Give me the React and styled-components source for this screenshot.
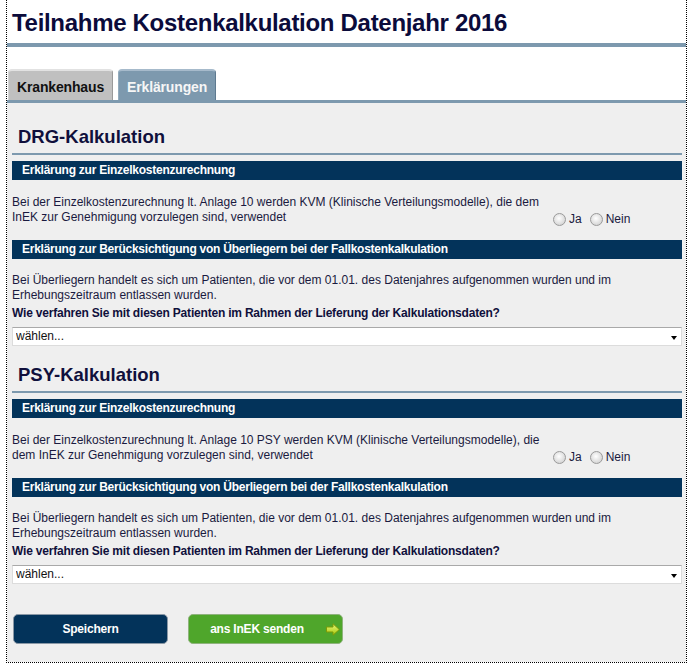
import React from 'react';
import styled, { createGlobalStyle } from 'styled-components';

const GlobalStyle = createGlobalStyle`
    body {
        margin: 0;
        background: #ffffff;
        font-family: "Liberation Sans", Arial, sans-serif;
        color: #1a1a40;
    }
`;

const sections = [
    {
        title: 'DRG-Kalkulation',
        kvm: 'Bei der Einzelkostenzurechnung lt. Anlage 10 werden KVM (Klinische Verteilungsmodelle), die dem InEK zur Genehmigung vorzulegen sind, verwendet',
    },
    {
        title: 'PSY-Kalkulation',
        kvm: 'Bei der Einzelkostenzurechnung lt. Anlage 10 PSY werden KVM (Klinische Verteilungsmodelle), die dem InEK zur Genehmigung vorzulegen sind, verwendet',
    },
];

function ArrowIcon() {
    return (
        <svg width="14" height="13" viewBox="0 0 14 13">
            <defs>
                <linearGradient id="arr" x1="0" y1="0" x2="0" y2="1">
                    <stop offset="0" stopColor="#e6f77a" />
                    <stop offset="1" stopColor="#a8c80a" />
                </linearGradient>
            </defs>
            <polygon
                points="0.5,4 7,4 7,0.8 13.3,6.5 7,12.2 7,9 0.5,9"
                fill="url(#arr)"
                stroke="#7d9a08"
                strokeWidth="1"
            />
        </svg>
    );
}

function Section({ title, kvm }) {
    return (
        <SectionBox>
            <SectionTitle>{title}</SectionTitle>
            <Bar>Erklärung zur Einzelkostenzurechnung</Bar>
            <QuestionRow>
                <RowText>{kvm}</RowText>
                <RadioGroup>
                    <RadioLabel>
                        <Radio />
                        Ja
                    </RadioLabel>
                    <RadioLabel>
                        <Radio />
                        Nein
                    </RadioLabel>
                </RadioGroup>
            </QuestionRow>
            <Bar>Erklärung zur Berücksichtigung von Überliegern bei der Fallkostenkalkulation</Bar>
            <Paragraph>
                Bei Überliegern handelt es sich um Patienten, die vor dem 01.01. des Datenjahres aufgenommen wurden und im
                Erhebungszeitraum entlassen wurden.
            </Paragraph>
            <Question>Wie verfahren Sie mit diesen Patienten im Rahmen der Lieferung der Kalkulationsdaten?</Question>
            <SelectWrap>
                <Select defaultValue="">
                    <option value="">wählen...</option>
                </Select>
            </SelectWrap>
        </SectionBox>
    );
}

function App() {
    return (
        <>
            <GlobalStyle />
            <Frame>
                <Title>Teilnahme Kostenkalkulation Datenjahr 2016</Title>
                <HeaderRule />
                <TabBar>
                    <Tab>Krankenhaus</Tab>
                    <Tab active>Erklärungen</Tab>
                </TabBar>
                <Content>
                    {sections.map((s) => (
                        <Section key={s.title} title={s.title} kvm={s.kvm} />
                    ))}
                    <Buttons>
                        <ActionButton>Speichern</ActionButton>
                        <ActionButton green>
                            ans InEK senden
                            <ArrowSlot>
                                <ArrowIcon />
                            </ArrowSlot>
                        </ActionButton>
                    </Buttons>
                </Content>
            </Frame>
        </>
    );
}

const Frame = styled.div`
    box-sizing: border-box;
    width: 681px;
    margin-left: 6px;
    border: 1px dotted #000;
    border-top: none;
`;

const Title = styled.h1`
    margin: 0;
    padding: 8px 0 0 5px;
    font-size: 24px;
    line-height: 30px;
    letter-spacing: -0.3px;
    font-weight: bold;
    color: #0b0b3b;
`;

const HeaderRule = styled.div`
    height: 4px;
    margin-top: 5px;
    background: #7d99ae;
`;

const TabBar = styled.div`
    display: flex;
    align-items: flex-end;
    gap: 5px;
    padding: 22px 0 0 1px;
    border-bottom: 3px solid #7d99ae;
`;

const Tab = styled.div`
    box-sizing: border-box;
    height: 31px;
    padding: 8px 8px 0;
    border-top: 2px solid ${(p) => (p.active ? '#a6bacb' : '#e2e2e2')};
    border-left: 1px solid ${(p) => (p.active ? '#93abbd' : '#d4d4d4')};
    border-right: 1px solid ${(p) => (p.active ? '#5e7a90' : '#9a9a9a')};
    border-radius: 4px 4px 0 0;
    background: ${(p) => (p.active ? '#7d99ae' : '#c0c0c0')};
    color: ${(p) => (p.active ? '#f6f6f6' : '#111111')};
    font-size: 14px;
    line-height: 16px;
    font-weight: bold;
    letter-spacing: -0.15px;
`;

const Content = styled.div`
    background: #efefef;
    padding: 5px 4px 18px 5px;
`;

const SectionBox = styled.div`
    padding-top: 18px;
`;

const SectionTitle = styled.h2`
    margin: 0;
    padding: 0 0 5px 6px;
    border-bottom: 2px solid #7d99ae;
    font-size: 18.5px;
    line-height: 22px;
    font-weight: bold;
    color: #10103c;
`;

const Bar = styled.div`
    margin-top: 6px;
    height: 19px;
    padding-left: 10px;
    background: #03335a;
    color: #ffffff;
    font-size: 12px;
    line-height: 19px;
    font-weight: bold;
    letter-spacing: -0.25px;
`;

const QuestionRow = styled.div`
    display: flex;
    margin: 15px 0 15px;
`;

const RowText = styled.div`
    flex: 0 0 538px;
    font-size: 12px;
    line-height: 15px;
`;

const RadioGroup = styled.div`
    align-self: flex-end;
    display: flex;
    align-items: center;
    gap: 8px;
    margin: 0 0 -2px 3px;
    font-size: 12px;
    line-height: 15px;
`;

const RadioLabel = styled.label`
    display: flex;
    align-items: center;
    gap: 3px;
`;

const Radio = styled.span`
    box-sizing: border-box;
    width: 13px;
    height: 13px;
    border-radius: 50%;
    border: 1px solid #9a9a9a;
    background: radial-gradient(circle at 45% 40%, #ffffff 0%, #e6e6e6 45%, #c9c9c9 100%);
`;

const Paragraph = styled.p`
    margin: 14px 0 0;
    font-size: 12px;
    line-height: 15px;
`;

const Question = styled.p`
    margin: 3px 0 0;
    font-size: 12px;
    line-height: 15px;
    font-weight: bold;
    letter-spacing: -0.2px;
    color: #10103c;
`;

const SelectWrap = styled.div`
    position: relative;
    margin-top: 6px;

    &::after {
        content: '';
        position: absolute;
        top: 9px;
        right: 5px;
        border-left: 3.5px solid transparent;
        border-right: 3.5px solid transparent;
        border-top: 4px solid #000;
        pointer-events: none;
    }
`;

const Select = styled.select`
    appearance: none;
    display: block;
    box-sizing: border-box;
    width: 100%;
    height: 19px;
    margin: 0;
    padding: 0 0 0 3px;
    border: 1px solid #dcdcdc;
    border-top-color: #a9a9a9;
    border-radius: 0;
    background: #ffffff;
    color: #111111;
    font-family: "Liberation Sans", Arial, sans-serif;
    font-size: 12px;
    line-height: 17px;
    outline: none;
`;

const Buttons = styled.div`
    display: flex;
    gap: 20px;
    margin: 30px 0 0 1px;
`;

const ActionButton = styled.button`
    position: relative;
    box-sizing: border-box;
    width: 155px;
    height: 30px;
    padding: 0 ${(p) => (p.green ? '17px' : '0')} 0 0;
    border: 1px solid ${(p) => (p.green ? '#8fb37d' : '#8a98a6')};
    border-radius: 5px;
    background: ${(p) => (p.green ? '#4fa62b' : '#03335a')};
    color: #ffffff;
    font-family: "Liberation Sans", Arial, sans-serif;
    font-size: 12px;
    font-weight: bold;
    letter-spacing: -0.2px;
    cursor: pointer;
`;

const ArrowSlot = styled.span`
    position: absolute;
    right: 2px;
    top: 8px;
    display: flex;
`;

export default App;
